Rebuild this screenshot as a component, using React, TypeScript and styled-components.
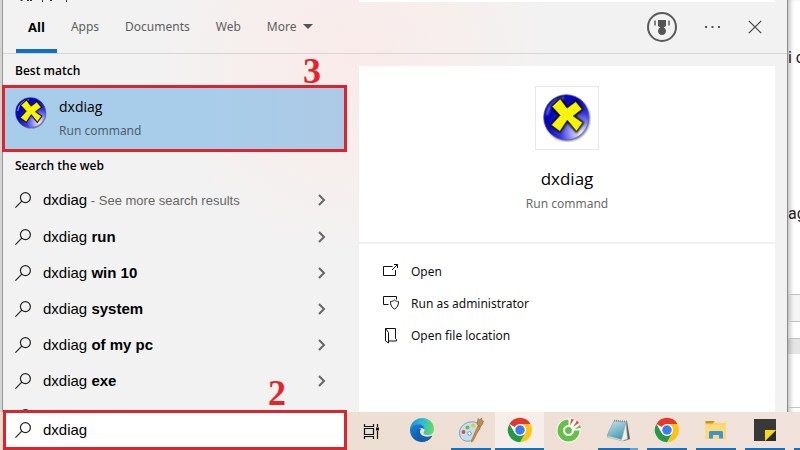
import React, { useState } from "react";
import styled, { createGlobalStyle, css } from "styled-components";

const GlobalStyle = createGlobalStyle`
  *, *::before, *::after { box-sizing: border-box; }
  body { margin: 0; overflow: hidden; }
  button, input { font: inherit; color: inherit; }
  button { border: 0; padding: 0; background: none; text-align: left; cursor: pointer; }
  svg { display: block; flex: none; }
`;

const ui = `"Noto Sans", "Open Sans", sans-serif`;
const uiHeading = `"Open Sans", "Noto Sans", sans-serif`;
const arial = `"Liberation Sans", Arial, sans-serif`;

/* ---------- layout ---------- */

const Screen = styled.div`
  display: flex;
  flex-direction: column;
  height: 100vh;
  background: #fff;
  color: #111;
  font: 12px/20px ${ui};
`;

const Desktop = styled.div`
  display: flex;
  flex: 1;
  min-height: 0;
`;

const LeftEdge = styled.div`
  width: 3px;
  flex: none;
  background: #d3d3d3;
  border-right: 1px solid #999;
`;

const SearchWindow = styled.main`
  display: flex;
  flex-direction: column;
  flex: 1;
  min-width: 0;
  background:
    radial-gradient(circle 200px at 350px 60px, #f9ebe9 0%, #f7eeed 45%, rgba(242, 242, 242, 0) 100%),
    #f2f2f2;
`;

const TopSliver = styled.div`
  display: flex;
  justify-content: space-between;
  height: 2px;
  overflow: hidden;
  padding-right: 12px;
`;

const SliverCard = styled.div`
  width: 416px;
  background: #fff;
`;

const Header = styled.header`
  display: flex;
  align-items: center;
  height: 52px;
  flex: none;
  padding: 0 25px 0 13px;
  border-bottom: 1px solid #d6d6d6;
`;

const Tabs = styled.nav`
  display: flex;
  flex: 1;
  align-self: stretch;
  gap: 2px;
`;

const Tab = styled.button<{ $active?: boolean }>`
  display: flex;
  align-items: center;
  gap: 6px;
  padding: 4px 12px 2px;
  color: #5e5e5e;
  border-bottom: 4px solid transparent;
  ${(p) =>
    p.$active &&
    css`
      color: #000;
      font: 700 13px/20px ${uiHeading};
      border-bottom-color: #1170c4;
    `}
`;

const Tools = styled.div`
  display: flex;
  align-items: center;
  gap: 28px;
  padding-bottom: 2px;
`;

const Body = styled.div`
  display: flex;
  flex: 1;
  min-height: 0;
`;

/* ---------- result list ---------- */

const Results = styled.section`
  position: relative;
  display: flex;
  flex-direction: column;
  width: 356px;
  flex: none;
  padding-right: 12px;
`;

const GroupTitle = styled.h2<{ $first?: boolean }>`
  margin: 0;
  padding: ${(p) => (p.$first ? "3px 12px 0" : "0 12px 2px")};
  flex: none;
  font: 600 12px/28px ${uiHeading};
  color: #000;
`;

const BestMatch = styled.button`
  display: flex;
  align-items: flex-start;
  gap: 12px;
  height: 67px;
  flex: none;
  margin-left: -1px;
  padding: 9px 10px;
  background: linear-gradient(90deg, #a8cdea 60%, #adc9e5);
  border: 3px solid #d9252d;
`;

const BestText = styled.span`
  display: flex;
  flex-direction: column;
  gap: 4px;
  font: 14px/20px ${uiHeading};
  color: #000;

  small {
    font: 12px/20px ${ui};
    color: #4c5f70;
  }
`;

const List = styled.ul`
  flex: 1;
  min-height: 0;
  overflow: hidden;
  margin: 0;
  padding: 0;
  list-style: none;

  li:first-child {
    padding-bottom: 1px;
  }
`;

const Suggestion = styled.button`
  display: flex;
  align-items: center;
  gap: 12px;
  width: 100%;
  height: 36px;
  padding: 0 21px 0 12px;
  font: 15px/20px ${arial};
  color: #000;

  span {
    flex: 1;
    white-space: pre;
  }
  small {
    font-size: 13px;
    color: #666;
  }
`;

const StepMark = styled.span<{ $right: number; $top?: number; $bottom?: number }>`
  position: absolute;
  right: ${(p) => p.$right}px;
  ${(p) => (p.$top !== undefined ? `top: ${p.$top}px;` : `bottom: ${p.$bottom}px;`)}
  font: 700 36px/36px "Liberation Serif", "Times New Roman", serif;
  color: #e8222a;
`;

/* ---------- detail pane ---------- */

const Detail = styled.section`
  display: flex;
  flex-direction: column;
  gap: 2px;
  flex: 1;
  min-width: 0;
  margin: 12px 12px 0 0;
`;

const Hero = styled.div`
  display: flex;
  flex-direction: column;
  align-items: center;
  height: 176px;
  flex: none;
  padding-top: 20px;
  background: #fff;
`;

const IconTile = styled.div`
  display: grid;
  place-items: center;
  width: 64px;
  height: 64px;
  border: 1px solid #e8e8e8;
`;

const HeroTitle = styled.h1`
  margin: 16px 0 0;
  font: 400 17px/26px ${uiHeading};
  color: #000;
`;

const HeroKind = styled.p`
  margin: 2px 0 0;
  color: #6b6b6b;
`;

const Actions = styled.div`
  display: flex;
  flex-direction: column;
  flex: 1;
  padding-top: 12px;
  background: #fff;
`;

const Action = styled.button`
  display: flex;
  align-items: center;
  gap: 12px;
  height: 32px;
  padding: 0 24px;
`;

/* ---------- page behind the window ---------- */

const BackPage = styled.aside`
  display: flex;
  flex-direction: column;
  width: 13px;
  flex: none;
  overflow: hidden;
  background: #fff;
  border-left: 1px solid #8d8d8d;
  box-shadow: inset 5px 0 5px -3px #bbb;
  font: 16px/20px Roboto, sans-serif;
  color: #222;
`;

const PageLine = styled.div<{ $height: number }>`
  display: flex;
  align-items: flex-end;
  height: ${(p) => p.$height}px;
  flex: none;
  white-space: pre;
`;

const PageBand = styled.div<{ $height: number; $tone?: string }>`
  height: ${(p) => p.$height}px;
  flex: none;
  border-top: 1px solid #c2c2c6;
  background: ${(p) => p.$tone || "transparent"};
`;

/* ---------- taskbar ---------- */

const Taskbar = styled.footer`
  display: flex;
  height: 38px;
  flex: none;
  padding-left: 3px;
  overflow: visible;
  background: linear-gradient(90deg, #eadccf, #eddfd3 50%, #f1e2db);
`;

const SearchBox = styled.form`
  position: relative;
  display: flex;
  align-items: center;
  gap: 12px;
  width: 344px;
  height: 40px;
  flex: none;
  margin-top: -2px;
  padding: 0 9px;
  background: #fff;
  border: 3px solid #d9252d;

  input {
    flex: 1;
    min-width: 0;
    border: 0;
    padding: 0;
    outline: 0;
    background: none;
    font: 15px/20px ${arial};
    color: #000;
  }
`;

const Apps = styled.div`
  display: flex;
  flex: 1;
  min-width: 0;
  overflow: hidden;
`;

const TaskViewButton = styled.button`
  display: grid;
  place-items: center;
  width: 48px;
  flex: none;
  margin-right: 2px;
`;

const AppButton = styled.button<{ $open?: boolean; $focused?: boolean; $stacked?: boolean }>`
  display: flex;
  flex-direction: column;
  align-items: center;
  width: 49px;
  flex: none;
  padding-top: 5px;
  background: ${(p) => (p.$focused ? "#f6efe9" : "transparent")};

  &::after {
    content: "";
    margin-top: auto;
    width: ${(p) => (p.$focused ? "100%" : "40px")};
    height: 2px;
    background: ${(p) =>
      p.$stacked
        ? "linear-gradient(90deg, #1272c2 32px, #5fa3d8 32px)"
        : p.$open || p.$focused
          ? "#1272c2"
          : "transparent"};
  }
`;

/* ---------- drawings ---------- */

const DxIcon = ({ size, id }: { size: number; id: string }) => (
  <svg width={size} height={size} viewBox="0 0 142 142" aria-hidden="true">
    <defs>
      <radialGradient id={id} cx="0.8" cy="0.84" r="0.72">
        <stop offset="0" stopColor="#eeeeff" />
        <stop offset="0.25" stopColor="#a9a9f8" />
        <stop offset="0.6" stopColor="#3a3ae2" />
        <stop offset="1" stopColor="#0707b8" />
      </radialGradient>
      <filter id={`${id}s`} x="-20%" y="-20%" width="150%" height="150%">
        <feGaussianBlur stdDeviation="3" />
      </filter>
    </defs>
    <circle cx="72" cy="73" r="67" fill="#777" filter={`url(#${id}s)`} />
    <circle cx="69" cy="69" r="67" fill={`url(#${id})`} stroke="#5a5aa8" strokeWidth="2" />
    <path d="M12 62a58 58 0 0 1 50-50" fill="none" stroke="#8f8ff5" strokeWidth="5" filter={`url(#${id}s)`} />
    <path
      d="M27 37 51 15 71 42 97 23 115 45 89 65 117 85 99 110 72 77 50 110 25 92 51 63Z"
      fill="#000"
      stroke="#000"
      strokeWidth="8"
      filter={`url(#${id}s)`}
    />
    <path
      d="M27 37 51 15 71 42 97 23 115 45 89 65 117 85 99 110 72 77 50 110 25 92 51 63Z"
      fill="#f8f30c"
      stroke="#55540a"
      strokeWidth="2"
      strokeLinejoin="round"
    />
  </svg>
);

const SearchIcon = () => (
  <svg width="16" height="16" viewBox="0 0 16 16" fill="none" stroke="#222" strokeWidth="1.2" aria-hidden="true">
    <circle cx="10.4" cy="5.6" r="5" />
    <path d="M6.8 9.2.4 15.6" />
  </svg>
);

const Chevron = () => (
  <svg width="8" height="12" viewBox="0 0 8 12" fill="none" stroke="#666" strokeWidth="2" aria-hidden="true">
    <path d="M1 1 6 6 1 11" />
  </svg>
);

const RewardsIcon = () => (
  <svg width="30" height="30" viewBox="0 0 30 30" aria-hidden="true">
    <circle cx="15" cy="15" r="14" fill="none" stroke="#5a5a5a" strokeWidth="2" />
    <path d="M11 8h8v6l-2.300 1.500a4 4 0 1 1-3.400 0L11 14Z" fill="#555" />
    <path d="M8 8.500v5M22 8.500v5" stroke="#666" strokeWidth="1.600" />
  </svg>
);

const DotsIcon = () => (
  <svg width="15" height="2" viewBox="0 0 15 2" fill="#555" aria-hidden="true">
    <path d="M0 0h2v2H0zM6.500 0h2v2h-2zM13 0h2v2h-2z" />
  </svg>
);

const CloseIcon = () => (
  <svg width="14" height="14" viewBox="0 0 14 14" stroke="#444" strokeWidth="1.200" aria-hidden="true">
    <path d="M.8.8 13.200 13.200M13.200.8.8 13.200" />
  </svg>
);

const MoreArrow = () => (
  <svg width="10" height="5" viewBox="0 0 10 5" fill="#555" aria-hidden="true">
    <path d="M0 0h10L5 5Z" />
  </svg>
);

const OpenIcon = () => (
  <svg width="16" height="16" viewBox="0 0 16 16" fill="none" stroke="#111" aria-hidden="true">
    <path d="M9.500 2.500h-9v9h12V6M9 6l5.500-5.500M11 .5h3.500V4" />
  </svg>
);

const AdminIcon = () => (
  <svg width="16" height="16" viewBox="0 0 16 16" fill="none" stroke="#111" aria-hidden="true">
    <path d="M5.500 8.500h-5v-8h13v3" />
    <path d="M11.500 4C10.500 5 9 5.500 7.500 5.500 7.500 9 8.500 11.500 11.500 13c3-1.500 4-4 4-7.500-1.500 0-3-.5-4-1.500Z" />
  </svg>
);

const FolderIcon = () => (
  <svg width="16" height="16" viewBox="0 0 16 16" fill="none" stroke="#111" aria-hidden="true">
    <path d="M2.500.5h10v10l1 1v1.500H6M2.500.5v12.500l3 2V4.500L2.500.5" />
  </svg>
);

const TaskViewIcon = () => (
  <svg width="17" height="17" viewBox="0 0 17 17" fill="none" stroke="#111" strokeWidth="1.200" aria-hidden="true">
    <path d="M1.500 1v2.500h9V1M1.500 16v-2.500h9V16M1.500 5.500h9v6h-9ZM14.500 1v3M14.500 8v8" />
    <path d="M13 4.500h3v3h-3z" fill="#111" stroke="none" />
  </svg>
);

const EdgeIcon = () => (
  <svg width="26" height="26" viewBox="0 0 26 26" aria-hidden="true">
    <defs>
      <linearGradient id="edgeTop" x1="0" y1="0.4" x2="1" y2="0.5">
        <stop offset="0" stopColor="#1b8fd8" />
        <stop offset="0.5" stopColor="#2fbbd4" />
        <stop offset="1" stopColor="#66dc58" />
      </linearGradient>
      <linearGradient id="edgeLow" x1="0" y1="0" x2="0.6" y2="1">
        <stop offset="0" stopColor="#1b83d8" />
        <stop offset="1" stopColor="#0c53a4" />
      </linearGradient>
    </defs>
    <path d="M1 12C2 5 7 1 13.500 1 20 1 25 6 25 12c0 4-3 6-6.500 6-2.500 0-4-1-4-2 0-1 1-1.500 1-3.500 0-2.500-2.500-4-5.500-4-4 0-7.500 1.500-9 3.500Z" fill="url(#edgeTop)" />
    <path d="M1 12c1.500-3 5-4.500 9-4.500 3 0 5.500 2 5.500 5-1-1-2-1.500-3.500-1.500-2 0-4 2-4 5 0 4 3.500 7 7.500 7 3 0 5.500-1 7-3.500-2 3.500-5.500 5.500-9.500 5.500C6 25 1 19.500 1 13Z" fill="url(#edgeLow)" />
    <path d="M9.500 12C8 13 7.500 14.500 7.500 16.500c0 4.500 4 7.500 8.500 7.500 3 0 5.500-2 7-4.500.3-.6-.2-.8-.7-.6-5 2-10.800.1-11.300-3.900-.1-1.500.5-2.500 1.300-3.300-1-.3-2-.2-2.800.3Z" fill="#145fae" />
  </svg>
);

const PaintIcon = () => (
  <svg width="26" height="26" viewBox="0 0 26 26" aria-hidden="true">
    <path d="M2 19C0 12 5 6 12 5c6-1 10 2 10 6 0 3-3 3-4 5-1 3-1 6-6 8-4 1-9-1-10-5Z" fill="#c4deed" stroke="#75a3bf" />
    <circle cx="5.500" cy="15" r="1.900" fill="#d84b4b" />
    <circle cx="9.500" cy="10.500" r="2" fill="#74b94d" />
    <circle cx="15" cy="8.500" r="2" fill="#edc53b" />
    <circle cx="11.500" cy="16.500" r="1.800" fill="#fff" stroke="#6a91b5" />
    <path d="M13.500 23.500 20 8.500l2.500 1-7.500 14.500-1.500 1Z" fill="#cf8b45" stroke="#a96627" strokeWidth=".6" />
    <path d="M20 8.500C18 5 20 4 20 1.500l1.500 1.500L23.500 1l.5 2.500L25.500 4c-1 3-1 4-3 5.500Z" fill="#bd8a55" stroke="#8d5e2e" strokeWidth=".5" />
  </svg>
);

const ChromeIcon = () => (
  <svg width="26" height="26" viewBox="0 0 48 48" aria-hidden="true">
    <circle cx="24" cy="24" r="22.500" fill="#fff" />
    <path d="M24 24 4.500 12.700A22.500 22.500 0 0 1 43.500 12.700H24Z" fill="#e2392c" />
    <path d="M24 13h19.500A22.500 22.500 0 0 1 24 46.500l9.700-17Z" fill="#fbc417" />
    <path d="M4.500 12.700 14.300 29.600 24 35l9-4-9 15.500A22.500 22.500 0 0 1 4.500 12.700Z" fill="#279847" />
    <circle cx="24" cy="24" r="11.200" fill="#fff" />
    <circle cx="24" cy="24" r="8.800" fill="#3b7ded" />
  </svg>
);

const CocCocIcon = () => (
  <svg width="26" height="26" viewBox="0 0 26 26" aria-hidden="true">
    <circle cx="12.500" cy="13.500" r="12" fill="#fff" />
    <path d="M12.500 2.500a11 11 0 1 0 11 11H18a5.500 5.500 0 1 1-5.500-5.500Z" fill="#66bf48" />
    <circle cx="12.500" cy="13.500" r="3.400" fill="#66bf48" />
    <path d="M14 8.500 15 2l3 .5ZM17 10l4-6.500 2 2.500Z" fill="#e2523d" />
    <path d="m18.500 12 5.500-4 .8 3Z" fill="#66bf48" />
  </svg>
);

const NotepadIcon = () => (
  <svg width="26" height="26" viewBox="0 0 26 26" aria-hidden="true">
    <defs>
      <linearGradient id="pad" x1="0" y1="0" x2="0.5" y2="1">
        <stop offset="0" stopColor="#c8e9f0" />
        <stop offset="1" stopColor="#4e9db5" />
      </linearGradient>
    </defs>
    <path d="M22 4 25 22l-6 2-3-3Z" fill="#5b6063" />
    <path d="m21 5 1.500 17-5 2L2 20Z" fill="#f4efe0" stroke="#a2a59c" strokeWidth=".6" />
    <path d="M9 4 21 5l-4.500 17.500L2 18.500Z" fill="url(#pad)" stroke="#6fa6b5" strokeWidth=".6" />
    <path d="M9 3.500 22 4.500" stroke="#888" strokeWidth="1.600" strokeDasharray="1 1" />
  </svg>
);

const ExplorerIcon = () => (
  <svg width="26" height="26" viewBox="0 0 26 26" aria-hidden="true">
    <path d="M2.500 4h9l1.500 2h10v16h-20.500Z" fill="#ffd568" />
    <path d="M2.500 4h9l-1.500 2.500H2.500Z" fill="#cc9320" />
    <path d="M2.500 8H23v13H2.500Z" fill="#fddb79" />
    <path d="M6 21.500V15l1-1h12l1 1v6.500h-4V18h-6v3.500Z" fill="#3c94d3" />
  </svg>
);

const StickyIcon = () => (
  <svg width="26" height="26" viewBox="0 0 26 26" aria-hidden="true">
    <path d="M2 2h22v11L13 24H2Z" fill="#383838" />
    <path d="M24 13v11H13Z" fill="#2b2b2b" />
    <path d="M13 13h11L13 24Z" fill="#fcd90e" />
  </svg>
);

const ClippedGlyphs = () => (
  <svg width="70" height="2" viewBox="0 0 70 2" fill="#333" aria-hidden="true">
    <path d="M18 0h2l-1 1h-2zM24 0h2v1h-2zM27 0h2v1h-2zM39 0h1v2h-1zM47 0h2v1h-2zM63 0h1v2h-1z" />
  </svg>
);

/* ---------- page ---------- */

const suggestions = ["run", "win 10", "system", "of my pc", "exe"];
const tabs = ["All", "Apps", "Documents", "Web", "More"];

export default function App() {
  const [tab, setTab] = useState("All");
  const [query, setQuery] = useState("dxdiag");

  return (
    <Screen>
      <GlobalStyle />
      <Desktop>
        <LeftEdge />
        <SearchWindow>
          <TopSliver>
            <ClippedGlyphs />
            <SliverCard />
          </TopSliver>
          <Header>
            <Tabs>
              {tabs.map((name) => (
                <Tab key={name} type="button" $active={tab === name} onClick={() => setTab(name)}>
                  {name}
                  {name === "More" && <MoreArrow />}
                </Tab>
              ))}
            </Tabs>
            <Tools>
              <button type="button" aria-label="Rewards">
                <RewardsIcon />
              </button>
              <button type="button" aria-label="Options">
                <DotsIcon />
              </button>
              <button type="button" aria-label="Close">
                <CloseIcon />
              </button>
            </Tools>
          </Header>
          <Body>
            <Results>
              <GroupTitle $first>Best match</GroupTitle>
              <BestMatch type="button">
                <DxIcon size={32} id="dxSmall" />
                <BestText>
                  dxdiag
                  <small>Run command</small>
                </BestText>
              </BestMatch>
              <GroupTitle>Search the web</GroupTitle>
              <List>
                <li>
                  <Suggestion type="button">
                    <SearchIcon />
                    <span>
                      dxdiag<small> - See more search results</small>
                    </span>
                    <Chevron />
                  </Suggestion>
                </li>
                {suggestions.map((s) => (
                  <li key={s}>
                    <Suggestion type="button">
                      <SearchIcon />
                      <span>
                        dxdiag <b>{s}</b>
                      </span>
                      <Chevron />
                    </Suggestion>
                  </li>
                ))}
                <li>
                  <Suggestion type="button" aria-label="More suggestions">
                    <SearchIcon />
                  </Suggestion>
                </li>
              </List>
              <StepMark $right={38} $top={-1}>3</StepMark>
              <StepMark $right={73} $bottom={1}>2</StepMark>
            </Results>
            <Detail>
              <Hero>
                <IconTile>
                  <DxIcon size={48} id="dxLarge" />
                </IconTile>
                <HeroTitle>dxdiag</HeroTitle>
                <HeroKind>Run command</HeroKind>
              </Hero>
              <Actions>
                <Action type="button">
                  <OpenIcon />
                  Open
                </Action>
                <Action type="button">
                  <AdminIcon />
                  Run as administrator
                </Action>
                <Action type="button">
                  <FolderIcon />
                  Open file location
                </Action>
              </Actions>
            </Detail>
          </Body>
        </SearchWindow>
        <BackPage>
          <PageLine $height={68}>i c</PageLine>
          <PageLine $height={156}>ag</PageLine>
          <PageLine $height={70} />
          <PageBand $height={27} $tone="rgba(0, 0, 0, 0.04)" />
          <PageBand $height={17} />
          <PageBand $height={16} $tone="rgba(0, 0, 0, 0.1)" />
          <PageLine $height={53} />
          <PageBand $height={5} />
        </BackPage>
      </Desktop>
      <Taskbar>
        <SearchBox onSubmit={(e) => e.preventDefault()}>
          <SearchIcon />
          <input aria-label="Search" value={query} onChange={(e) => setQuery(e.target.value)} />
        </SearchBox>
        <Apps>
          <TaskViewButton type="button" aria-label="Task view">
            <TaskViewIcon />
          </TaskViewButton>
          <AppButton type="button" aria-label="Edge"><EdgeIcon /></AppButton>
          <AppButton type="button" aria-label="Paint" $open><PaintIcon /></AppButton>
          <AppButton type="button" aria-label="Chrome" $focused><ChromeIcon /></AppButton>
          <AppButton type="button" aria-label="Coc Coc"><CocCocIcon /></AppButton>
          <AppButton type="button" aria-label="Notepad" $stacked><NotepadIcon /></AppButton>
          <AppButton type="button" aria-label="Chrome profile" $open><ChromeIcon /></AppButton>
          <AppButton type="button" aria-label="File Explorer" $open><ExplorerIcon /></AppButton>
          <AppButton type="button" aria-label="Sticky Notes" $open><StickyIcon /></AppButton>
          <AppButton type="button" aria-label="Next app" $open />
        </Apps>
      </Taskbar>
    </Screen>
  );
}
